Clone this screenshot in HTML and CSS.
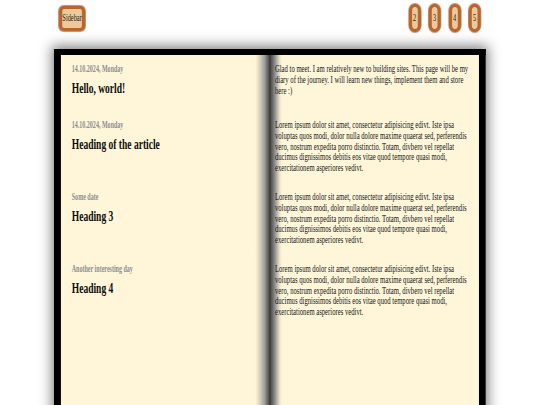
FILE: index.html
```html
<!DOCTYPE html>
<html lang="en">
<head>
<meta charset="utf-8">
<title>Diary</title>
<link rel="stylesheet" href="styles.css">
</head>
<body>
<div class="stage">
  <header class="topbar">
    <button class="btn btn-sidebar">Sidebar</button>
    <nav class="pager">
      <button class="btn btn-page">2</button>
      <button class="btn btn-page">3</button>
      <button class="btn btn-page">4</button>
      <button class="btn btn-page">5</button>
    </nav>
  </header>
  <main class="book">
    <div class="spread">
      <div class="entry">
        <p class="date">14.10.2024, Monday</p>
        <h2 class="title">Hello, world!</h2>
      </div>
      <p class="text">Glad to meet. I am relatively new to building sites. This page will be my diary of the journey. I will learn new things, implement them and store here :)</p>
      <div class="entry">
        <p class="date">14.10.2024, Monday</p>
        <h2 class="title">Heading of the article</h2>
      </div>
      <p class="text">Lorem ipsum dolor sit amet, consectetur adipisicing edivt. Iste ipsa voluptas quos modi, dolor nulla dolore maxime quaerat sed, perferendis vero, nostrum expedita porro distinctio. Totam, divbero vel repellat ducimus dignissimos debitis eos vitae quod tempore quasi modi, exercitationem asperiores vedivt.</p>
      <div class="entry">
        <p class="date">Some date</p>
        <h2 class="title">Heading 3</h2>
      </div>
      <p class="text">Lorem ipsum dolor sit amet, consectetur adipisicing edivt. Iste ipsa voluptas quos modi, dolor nulla dolore maxime quaerat sed, perferendis vero, nostrum expedita porro distinctio. Totam, divbero vel repellat ducimus dignissimos debitis eos vitae quod tempore quasi modi, exercitationem asperiores vedivt.</p>
      <div class="entry">
        <p class="date">Another interesting day</p>
        <h2 class="title">Heading 4</h2>
      </div>
      <p class="text">Lorem ipsum dolor sit amet, consectetur adipisicing edivt. Iste ipsa voluptas quos modi, dolor nulla dolore maxime quaerat sed, perferendis vero, nostrum expedita porro distinctio. Totam, divbero vel repellat ducimus dignissimos debitis eos vitae quod tempore quasi modi, exercitationem asperiores vedivt.</p>
    </div>
  </main>
</div>
</body>
</html>
```

FILE: styles.css
```css
html, body {
  margin: 0;
  padding: 0;
  height: 100%;
  background: #ffffff;
  overflow: hidden;
}

body {
  font-family: "Liberation Serif", "Times New Roman", serif;
}

/* the whole page is drawn narrow: glyphs and boxes are condensed horizontally */
.stage {
  width: 850px;
  transform: scaleX(0.635);
  transform-origin: 0 0;
}

.topbar {
  display: flex;
  justify-content: space-between;
  align-items: center;
  box-sizing: border-box;
  width: 680px;
  height: 32px;
  margin-left: 85px;
  padding: 4px 8px 0 8px;
}

.btn {
  font-family: inherit;
  font-size: 10px;
  line-height: 1;
  color: #2a1c10;
  background: #ecc99c;
  border-style: solid;
  border-color: #b9652b;
  border-width: 3px 5px;
  box-shadow: 0 0 1px 1px rgba(120, 60, 20, 0.55);
  box-sizing: border-box;
  padding: 0;
  margin: 0;
}

.btn-sidebar {
  width: 41px;
  height: 25px;
  border-radius: 8px / 5px;
}

.pager {
  display: flex;
  gap: 12.5px;
}

.btn-page {
  width: 19px;
  height: 28px;
  border-radius: 10px / 7px;
}

.book {
  box-sizing: border-box;
  width: 680px;
  height: 380px;
  margin: 17px 0 0 85px;
  border-style: solid;
  border-color: #000;
  border-width: 6px 11px 0;
  box-shadow: 0 0 15px 3px rgba(0, 0, 0, 0.5);
}

.spread {
  display: grid;
  grid-template-columns: 1fr 1fr;
  row-gap: 18px;
  align-content: start;
  box-sizing: border-box;
  height: 100%;
  padding-top: 9px;
  background: linear-gradient(to right,
    #fff6da 0,
    #fff6da 306px,
    #d9d2bd 313px,
    #9a9a9a 321px,
    #555555 327px,
    #3a3a3a 329px,
    #5c5c5c 332px,
    #9a9a98 338px,
    #e6dfc8 344px,
    #fff6da 348px,
    #fff6da 100%);
}

.entry {
  padding-left: 17px;
}

.date {
  margin: 0;
  font-size: 9.5px;
  line-height: 11px;
  font-weight: bold;
  color: #8e8e8e;
}

.title {
  margin: 4px 0 5px;
  font-size: 15px;
  line-height: 18px;
  font-weight: bold;
  color: #0d0d0d;
}

.text {
  margin: 0;
  padding: 0 11px 0 8px;
  font-size: 10.5px;
  line-height: 10.8px;
  color: #151515;
}
```
